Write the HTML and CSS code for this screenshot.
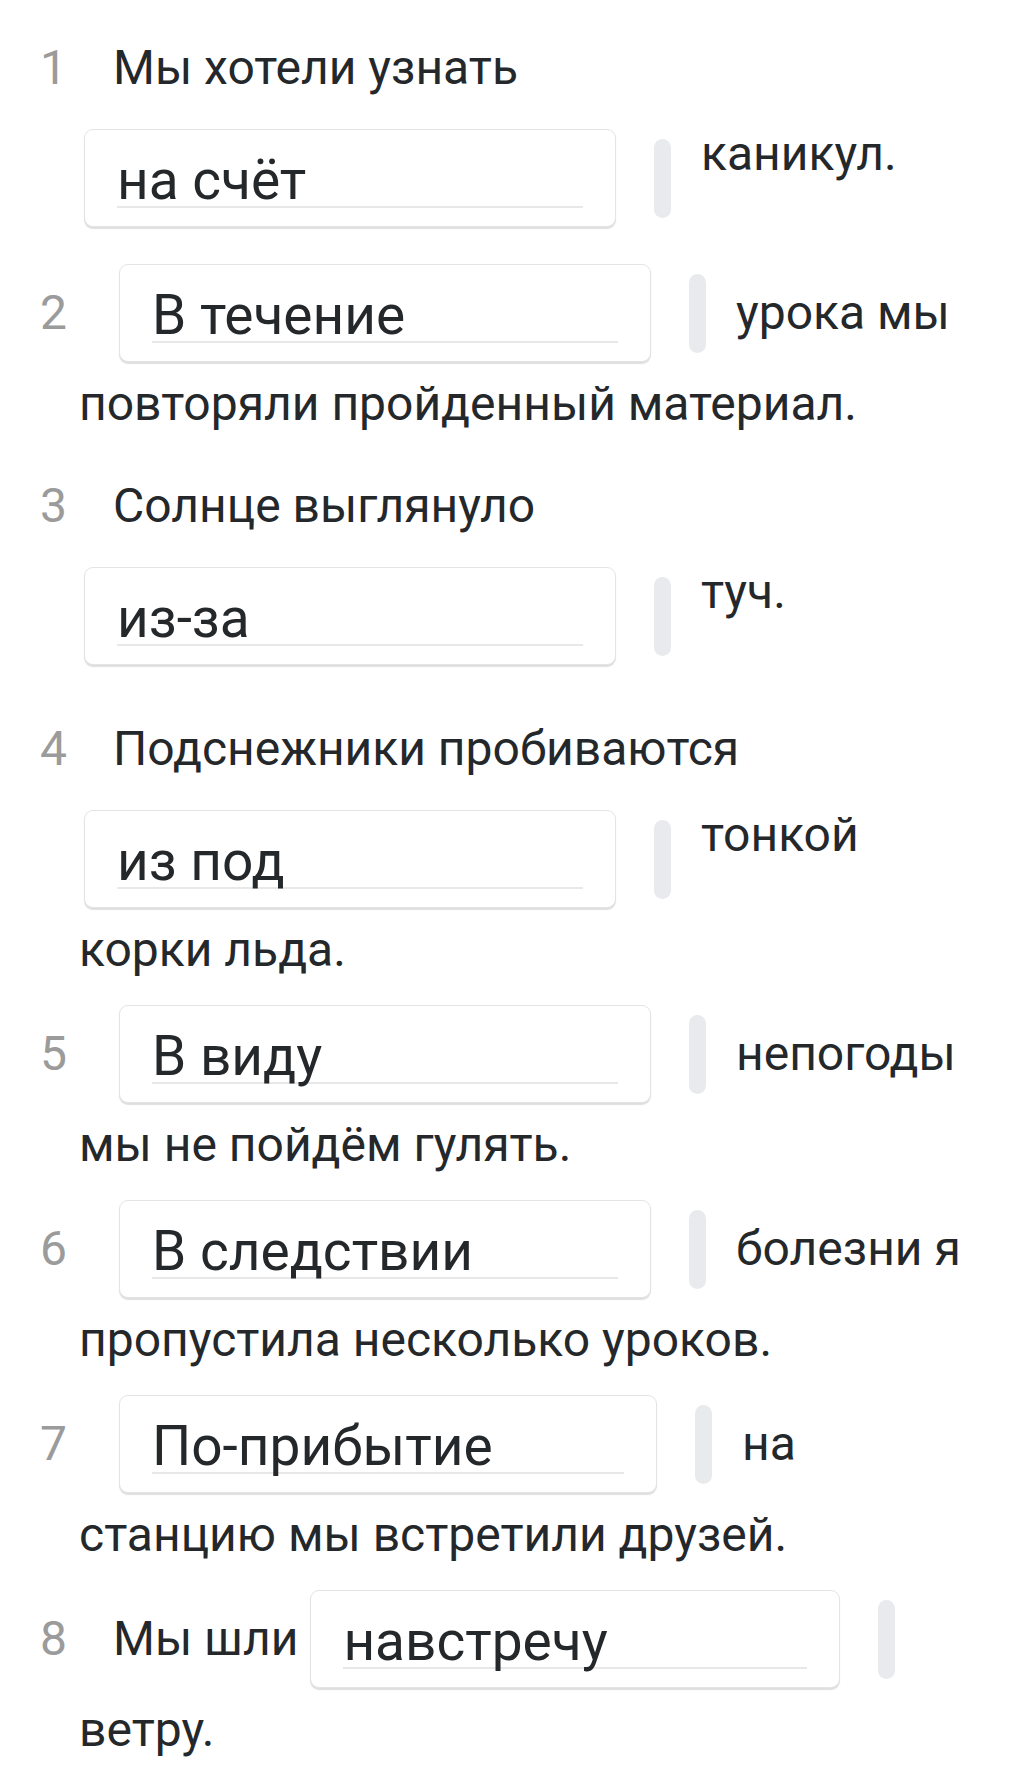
FILE: index.html
```html
<!DOCTYPE html>
<html lang="ru">
<head>
<meta charset="utf-8">
<title>Упражнение</title>
<link rel="stylesheet" href="styles.css">
</head>
<body>
<main class="list">

  <div class="item">
    <div class="row row-text"><span class="num">1</span><span class="txt">Мы хотели узнать</span></div>
    <div class="row row-b">
      <div class="box"><div class="field">на счёт</div></div>
      <span class="handle"></span>
      <span class="txt tail">каникул.</span>
    </div>
  </div>

  <div class="item">
    <div class="row row-a">
      <span class="num">2</span>
      <div class="box"><div class="field">В течение</div></div>
      <span class="handle"></span>
      <span class="txt tail">урока мы</span>
    </div>
    <div class="row row-cont"><span class="txt">повторяли пройденный материал.</span></div>
  </div>

  <div class="item">
    <div class="row row-text"><span class="num">3</span><span class="txt">Солнце выглянуло</span></div>
    <div class="row row-b">
      <div class="box"><div class="field">из-за</div></div>
      <span class="handle"></span>
      <span class="txt tail">туч.</span>
    </div>
  </div>

  <div class="item">
    <div class="row row-text"><span class="num">4</span><span class="txt">Подснежники пробиваются</span></div>
    <div class="row row-b">
      <div class="box"><div class="field">из под</div></div>
      <span class="handle"></span>
      <span class="txt tail">тонкой</span>
    </div>
    <div class="row row-cont"><span class="txt">корки льда.</span></div>
  </div>

  <div class="item">
    <div class="row row-a">
      <span class="num">5</span>
      <div class="box"><div class="field">В виду</div></div>
      <span class="handle"></span>
      <span class="txt tail">непогоды</span>
    </div>
    <div class="row row-cont"><span class="txt">мы не пойдём гулять.</span></div>
  </div>

  <div class="item">
    <div class="row row-a">
      <span class="num">6</span>
      <div class="box"><div class="field">В следствии</div></div>
      <span class="handle"></span>
      <span class="txt tail">болезни я</span>
    </div>
    <div class="row row-cont"><span class="txt">пропустила несколько уроков.</span></div>
  </div>

  <div class="item">
    <div class="row row-a">
      <span class="num">7</span>
      <div class="box box-wide"><div class="field">По-прибытие</div></div>
      <span class="handle"></span>
      <span class="txt tail">на</span>
    </div>
    <div class="row row-cont"><span class="txt">станцию мы встретили друзей.</span></div>
  </div>

  <div class="item">
    <div class="row row-a">
      <span class="num">8</span>
      <span class="txt">Мы шли</span>
      <div class="box box-after-text box-narrow"><div class="field">навстречу</div></div>
      <span class="handle"></span>
    </div>
    <div class="row row-cont"><span class="txt">ветру.</span></div>
  </div>

</main>
</body>
</html>
```

FILE: styles.css
```css
* {
  box-sizing: border-box;
}

html, body {
  margin: 0;
  padding: 0;
  background: #ffffff;
}

body {
  font-family: Roboto, "Noto Sans", "Liberation Sans", sans-serif;
  color: #25282b;
}

.list {
  padding-top: 38px;
  padding-bottom: 20px;
}

.item {
  display: flow-root;
  margin-bottom: 42px;
}

.row {
  display: flex;
  white-space: nowrap;
}

.txt {
  font-size: 48px;
  line-height: 60px;
  display: block;
}

.num {
  display: block;
  width: 23px;
  text-align: right;
  font-size: 48px;
  line-height: 60px;
  color: #9b9b9b;
}

/* text line beginning with a number */
.row-text {
  height: 60px;
  align-items: center;
  padding-left: 40px;
}

.row-text .num {
  margin-right: 50px;
}

/* continuation line of a sentence */
.row-cont {
  height: 60px;
  padding-left: 79px;
}

/* answer on its own line: following word sits near the top */
.row-b {
  align-items: flex-start;
  padding-left: 84px;
  margin-top: 31px;
  margin-bottom: 12px;
}

.row-b .tail {
  margin-top: -5px;
}

/* answer on the same line as the number */
.row-a {
  align-items: center;
  padding-left: 40px;
  margin-top: -17px;
  margin-bottom: 12px;
}

.row-a .num + .box {
  margin-left: 56px;
}

.row-a .num + .txt {
  margin-left: 50px;
}

.box {
  flex: none;
  width: 532px;
  height: 98px;
  padding: 24px 32px 0 32px;
  background: #ffffff;
  border: 1px solid #e4e4e4;
  border-radius: 9px;
  box-shadow: 0 2px 1px rgba(0, 0, 0, 0.13);
}

.box-wide {
  width: 538px;
}

.box-narrow {
  width: 530px;
}

.box-after-text {
  margin-left: 12px;
}

.field {
  font-size: 55px;
  line-height: 52px;
  height: 54px;
  color: #25282b;
  border-bottom: 2px solid #e8e8e8;
}

.handle {
  flex: none;
  align-self: center;
  display: block;
  width: 17px;
  height: 79px;
  margin-left: 38px;
  border-radius: 9px;
  background: #e8eaed;
}

.tail {
  margin-left: 30px;
}
```
